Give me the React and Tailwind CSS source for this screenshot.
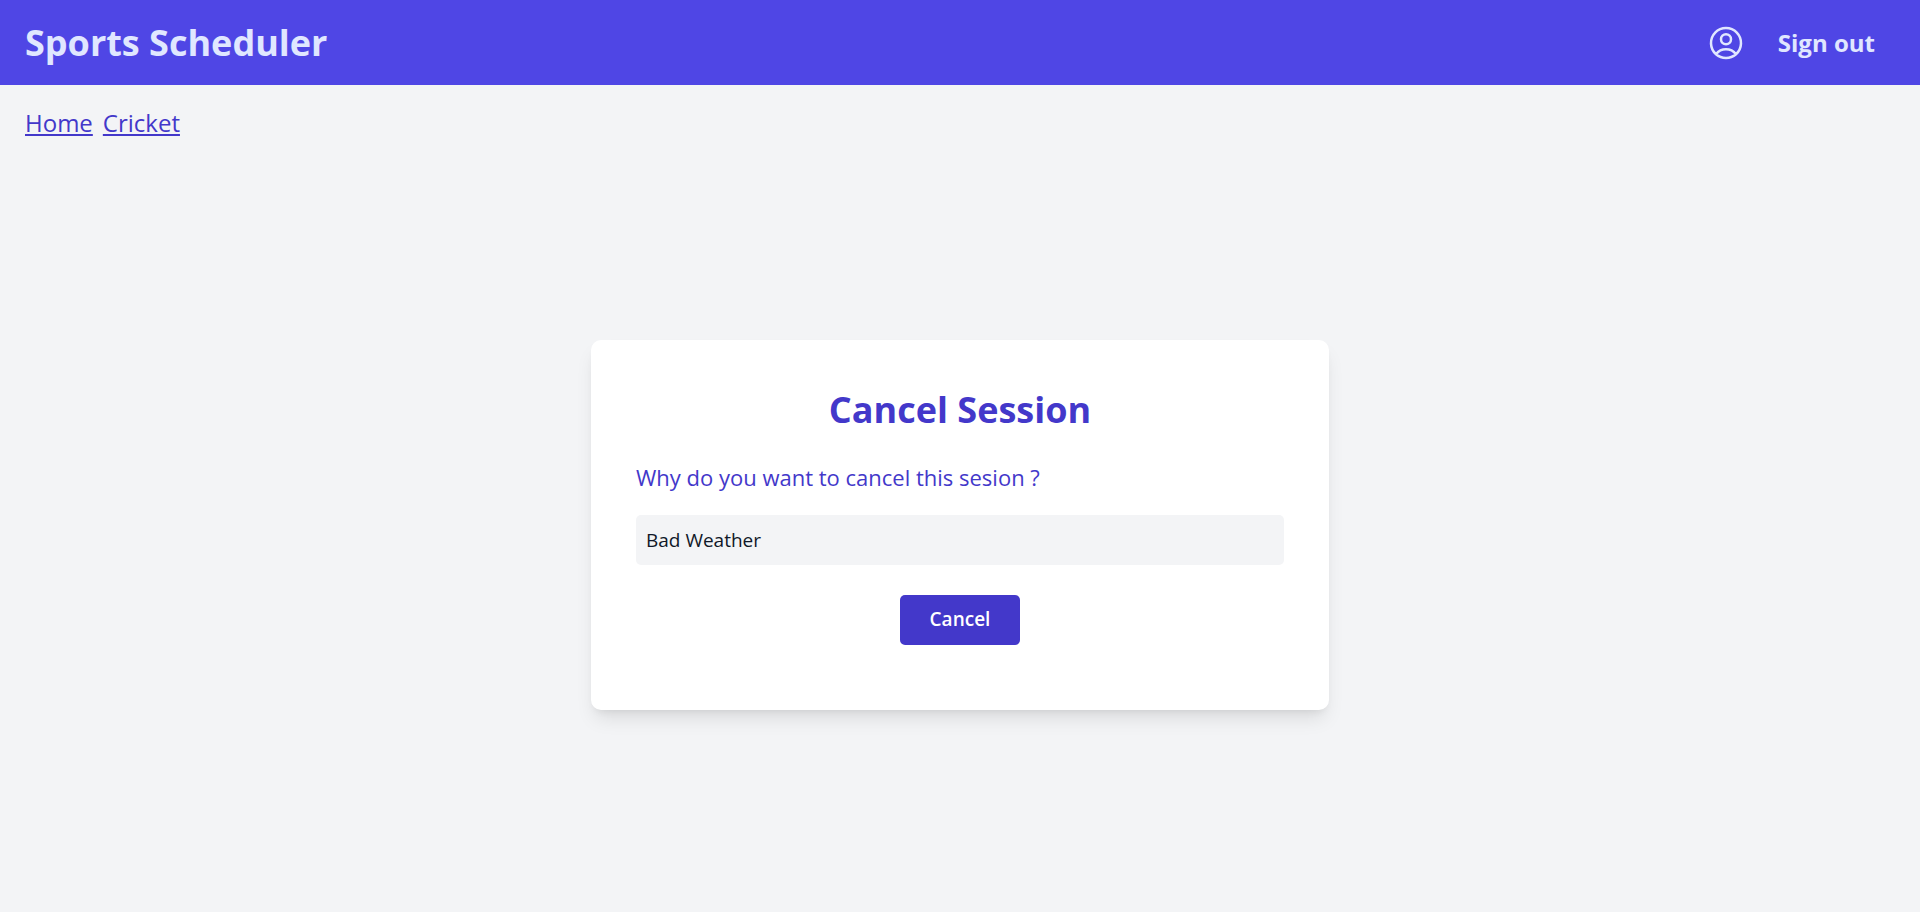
export default function App() {
  return (
    <div className="flex min-h-screen flex-col bg-gray-100 font-['Segoe_UI','Open_Sans',sans-serif]">
      <header className="flex items-center justify-between bg-[#4f46e5] py-5 pr-[45px] pl-[25px] text-[#e0e7ff]">
        <h1 className="text-[36px] leading-[45px] font-bold">Sports Scheduler</h1>
        <div className="flex items-center gap-8">
          <a href="#profile" aria-label="Profile">
            <svg
              className="size-10"
              viewBox="0 0 24 24"
              fill="none"
              stroke="currentColor"
              strokeWidth="1.5"
              strokeLinecap="round"
              strokeLinejoin="round"
              aria-hidden="true"
            >
              <path d="M17.982 18.725A7.488 7.488 0 0 0 12 15.75a7.488 7.488 0 0 0-5.982 2.975m11.963 0a9 9 0 1 0-11.963 0m11.963 0A8.966 8.966 0 0 1 12 21a8.966 8.966 0 0 1-5.982-2.275M15 9.75a3 3 0 1 1-6 0 3 3 0 0 1 6 0Z" />
            </svg>
          </a>
          <a href="#signout" className="text-[24px] leading-[30px] font-bold">
            Sign out
          </a>
        </div>
      </header>

      <nav className="flex gap-[10px] px-[25px] pt-6 text-[24px] leading-[28px] text-[#4338ca]">
        <a href="#home" className="underline">Home</a>
        <a href="#cricket" className="underline">Cricket</a>
      </nav>

      <main className="flex flex-1 items-center justify-center">
        <form
          className="flex w-full max-w-[738px] flex-col rounded-[10px] bg-white px-[45px] pt-[45px] pb-[65px] shadow-[0_12px_19px_-4px_rgb(0_0_0/0.1),0_5px_8px_-5px_rgb(0_0_0/0.1)]"
          onSubmit={(event) => event.preventDefault()}
        >
          <h2 className="text-center text-[36px] leading-[50px] font-bold text-[#4338ca]">Cancel Session</h2>
          <label htmlFor="reason" className="mt-[25px] text-[22px] leading-[35px] text-[#4338ca]">
            Why do you want to cancel this sesion ?
          </label>
          <input
            id="reason"
            type="text"
            defaultValue="Bad Weather"
            className="mt-5 h-[50px] rounded-[5px] bg-gray-100 px-[10px] text-[19px] text-gray-900 outline-none"
          />
          <button
            type="submit"
            className="mt-[30px] h-[50px] self-center rounded-[5px] bg-[#4338ca] px-[30px] text-[19px] font-semibold text-white"
          >
            Cancel
          </button>
        </form>
      </main>
    </div>
  );
}
